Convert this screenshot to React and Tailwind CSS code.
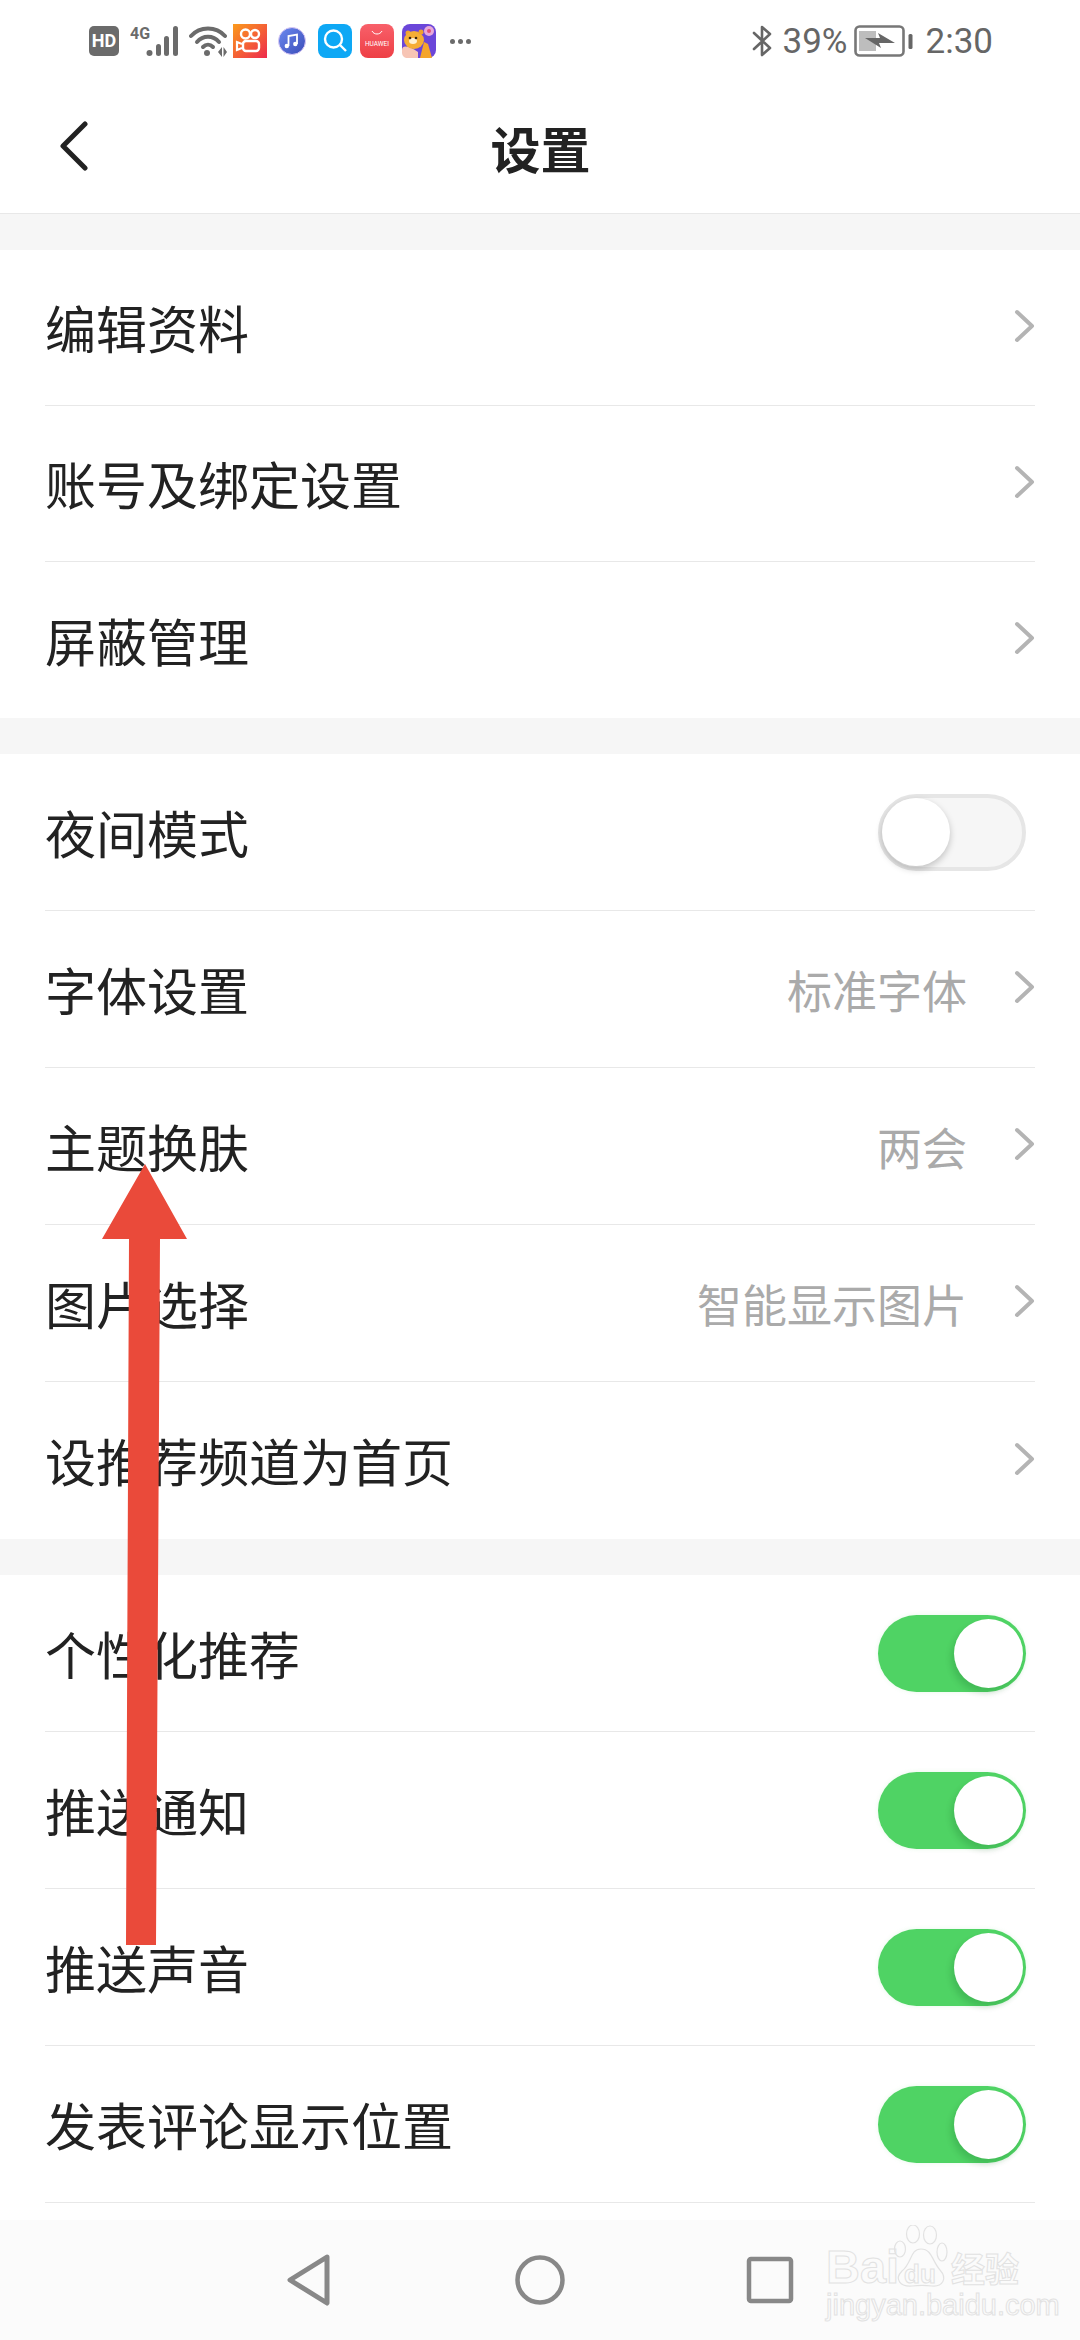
const CJK = { fontFamily: '"Noto Sans CJK SC", "Noto Sans", sans-serif' };

function Chevron() {
  return (
    <svg width="22" height="34" viewBox="0 0 22 34" fill="none" className="-mt-[4px] shrink-0">
      <path d="M3 3 L18 17 L3 31" stroke="#b4b4b4" strokeWidth="4" strokeLinecap="round" strokeLinejoin="round" />
    </svg>
  );
}

function Toggle({ on }) {
  if (on) {
    return (
      <div className="flex h-[77px] w-[148px] items-center justify-end rounded-full bg-[#4fd364] pr-[3px] shadow-[0_0_4px_rgba(79,211,100,0.15)]">
        <div className="h-[69px] w-[69px] rounded-full bg-white shadow-[-3px_5px_6px_rgba(0,60,20,0.16)]" />
      </div>
    );
  }
  return (
    <div className="flex h-[77px] w-[148px] items-center rounded-full border-[4px] border-[#e6e6e6] bg-[#f6f6f6]">
      <div className="h-[68px] w-[68px] rounded-full bg-white shadow-[0_3px_7px_rgba(0,0,0,0.22)]" />
    </div>
  );
}

function Row({ label, value, toggle, last, h = 'h-[157px]' }) {
  return (
    <div className={`mx-[45px] flex ${h} items-center justify-between ${last ? '' : 'border-b border-[#e8e8e8]'}`}>
      <span className="text-[51px] leading-none text-[#222]">{label}</span>
      {toggle !== undefined ? (
        <div className="mr-[9px]"><Toggle on={toggle} /></div>
      ) : (
        <div className="-mr-[1px] flex items-center gap-[47px]">
          {value && <span className="text-[45px] leading-none text-[#aaaaaa]">{value}</span>}
          <Chevron />
        </div>
      )}
    </div>
  );
}

function StatusLeft() {
  return (
    <div className="flex items-center">
      <div className="flex h-[30px] w-[30px] items-center justify-center rounded-[5px] bg-[#6b6b6b] text-[18px] font-bold leading-none text-white" style={{ fontFamily: 'Roboto, sans-serif' }}>HD</div>
      <svg width="50" height="32" viewBox="0 0 50 32" className="ml-[11px]">
        <text x="0" y="14" fontSize="16" fontWeight="700" fill="#6b6b6b" fontFamily="Roboto, sans-serif">4G</text>
        <circle cx="19.500" cy="28" r="3" fill="#6b6b6b" />
        <rect x="26" y="19" width="5" height="12" rx="2.500" fill="#6b6b6b" />
        <rect x="34" y="11" width="5" height="20" rx="2.500" fill="#6b6b6b" />
        <rect x="43" y="1" width="5" height="30" rx="2.500" fill="#6b6b6b" />
      </svg>
      <svg width="38" height="32" viewBox="0 0 38 32" className="ml-[9px]">
        <path d="M2 11 C11 1 27 1 36 11" stroke="#6b6b6b" strokeWidth="4" fill="none" strokeLinecap="round" />
        <path d="M8 17 C14 10 24 10 30 17" stroke="#6b6b6b" strokeWidth="4" fill="none" strokeLinecap="round" />
        <path d="M14 22 C17 19 21 19 24 22" stroke="#6b6b6b" strokeWidth="4" fill="none" strokeLinecap="round" />
        <circle cx="18" cy="28" r="3" fill="#6b6b6b" />
        <path d="M29 27 L33 22 V32 Z M34.500 22 L38 27 L34.500 32 Z" fill="#6b6b6b" />
      </svg>
      <svg width="34" height="34" viewBox="0 0 34 34" className="ml-[6px]">
        <defs>
          <linearGradient id="ks" x1="0" y1="0" x2="1" y2="1">
            <stop offset="0" stopColor="#fb9b1c" />
            <stop offset="1" stopColor="#ee2a4d" />
          </linearGradient>
        </defs>
        <rect width="34" height="34" fill="url(#ks)" />
        <circle cx="12.500" cy="10" r="4.500" fill="none" stroke="#fff" strokeWidth="2.400" />
        <circle cx="22" cy="10" r="4" fill="none" stroke="#fff" strokeWidth="2.400" />
        <rect x="10" y="17" width="16" height="10" rx="3" fill="none" stroke="#fff" strokeWidth="2.400" />
        <path d="M9 20 L4 18 V26 L9 24" fill="none" stroke="#fff" strokeWidth="2.200" />
      </svg>
      <svg width="30" height="30" viewBox="0 0 30 30" className="ml-[10px]">
        <defs>
          <linearGradient id="mu" x1="0" y1="0" x2="1" y2="1">
            <stop offset="0" stopColor="#6c8af0" />
            <stop offset="1" stopColor="#3a4cb8" />
          </linearGradient>
        </defs>
        <circle cx="15" cy="15" r="13.500" fill="url(#mu)" stroke="#d9c8f5" strokeWidth="1" />
        <path d="M11.500 20 V10 L20 8.500 V18" fill="none" stroke="#fff" strokeWidth="1.800" />
        <circle cx="9.800" cy="20" r="2.200" fill="#fff" />
        <circle cx="18.300" cy="18" r="2.200" fill="#fff" />
      </svg>
      <svg width="34" height="34" viewBox="0 0 34 34" className="ml-[11px]">
        <rect width="34" height="34" rx="8" fill="#0ea8f5" />
        <circle cx="15.500" cy="15" r="8.500" fill="none" stroke="#fff" strokeWidth="2.400" />
        <path d="M22 21 L28 27" stroke="#fff" strokeWidth="2.400" />
      </svg>
      <svg width="34" height="34" viewBox="0 0 34 34" className="ml-[8px]">
        <defs>
          <linearGradient id="hw" x1="0" y1="0" x2="0" y2="1">
            <stop offset="0" stopColor="#f8606a" />
            <stop offset="1" stopColor="#ee3f45" />
          </linearGradient>
        </defs>
        <rect width="34" height="34" rx="8" fill="url(#hw)" />
        <path d="M12 7 C14 11 20 11 22 7" fill="none" stroke="#fff" strokeWidth="1" />
        <text x="17" y="22" fontSize="6.500" fill="#fff" textAnchor="middle" fontFamily="Roboto, sans-serif">HUAWEI</text>
      </svg>
      <svg width="34" height="34" viewBox="0 0 34 34" className="ml-[8px]">
        <rect width="34" height="34" rx="8" fill="#6b46d9" />
        <path d="M0 26 C0 20 8 22 16 28 L16 34 H6 C2 34 0 32 0 28 Z" fill="#f7c5b5" />
        <circle cx="6" cy="9" r="2.500" fill="#f0a22e" />
        <ellipse cx="12" cy="16" rx="10" ry="9" fill="#f5ad35" />
        <circle cx="19" cy="8" r="2.500" fill="#f0a22e" />
        <ellipse cx="11" cy="17" rx="4" ry="3" fill="#fff0d0" />
        <circle cx="8" cy="14" r="1.300" fill="#3a2410" />
        <circle cx="14" cy="14" r="1.300" fill="#3a2410" />
        <path d="M18 34 L22 18 L26 20 L30 34 Z" fill="#f5a52c" />
        <circle cx="27" cy="7" r="5" fill="#e8a8d8" />
        <circle cx="27" cy="7" r="2" fill="#e0507a" />
      </svg>
      <div className="ml-[14px] flex items-center gap-[3px]">
        <div className="h-[5px] w-[5px] rounded-full bg-[#6b6b6b]" />
        <div className="h-[5px] w-[5px] rounded-full bg-[#6b6b6b]" />
        <div className="h-[5px] w-[5px] rounded-full bg-[#6b6b6b]" />
      </div>
    </div>
  );
}

function StatusRight() {
  return (
    <div className="flex items-center text-[35px] leading-none text-[#666]" style={{ fontFamily: 'Roboto, sans-serif' }}>
      <svg width="22" height="34" viewBox="0 0 22 34">
        <path d="M2 9 L18 24 L10 31 V3 L18 10 L2 25" fill="none" stroke="#666" strokeWidth="2.600" strokeLinecap="round" strokeLinejoin="round" />
      </svg>
      <span className="ml-[9px]">39%</span>
      <svg width="60" height="32" viewBox="0 0 60 32" className="ml-[6px]">
        <rect x="1.500" y="1.500" width="48" height="29" rx="4" fill="none" stroke="#777" strokeWidth="2.600" />
        <rect x="5" y="6" width="17" height="20" fill="#bdbdbd" />
        <path d="M11 13 L26 13 L24 8 L41 18 L25 18 L27 23 Z" fill="#666" />
        <rect x="54.500" y="9" width="4" height="15" rx="1.500" fill="#666" />
      </svg>
      <span className="ml-[12px]">2:30</span>
    </div>
  );
}

function Watermark() {
  return (
    <div className="pointer-events-none absolute left-[826px] top-[2225px] h-[100px] w-[200px]">
      <div className="absolute left-0 top-[18px] text-[47px] font-bold leading-none text-transparent [-webkit-text-stroke:1px_#e2e2e2]" style={{ fontFamily: '"Liberation Sans", sans-serif' }}>Bai</div>
      <svg width="60" height="64" viewBox="0 0 60 64" className="absolute left-[66px] top-0">
        <g fill="none" stroke="#e2e2e2" strokeWidth="1.200">
          <ellipse cx="21" cy="9" rx="6.500" ry="9" />
          <ellipse cx="38" cy="10" rx="6.500" ry="9" />
          <ellipse cx="8" cy="24" rx="5.500" ry="8" />
          <ellipse cx="50" cy="27" rx="5" ry="9" />
          <path d="M29 24 C18 24 20 38 10 46 C2 54 8 62 20 61 C28 60 32 60 40 61 C50 62 56 54 48 45 C40 36 40 24 29 24 Z" />
        </g>
      </svg>
      <div className="absolute left-[78px] top-[36px] text-[26px] font-bold leading-none text-transparent [-webkit-text-stroke:1px_#e2e2e2]" style={{ fontFamily: '"Liberation Sans", sans-serif' }}>du</div>
      <div className="absolute left-[125px] top-[26px] text-[34px] font-bold leading-none text-transparent [-webkit-text-stroke:1px_#e2e2e2]" style={CJK}>经验</div>
      <div className="absolute left-0 top-[66px] whitespace-nowrap text-[29px] leading-none text-transparent [-webkit-text-stroke:1px_#e2e2e2]" style={{ fontFamily: '"Liberation Sans", sans-serif' }}>jingyan.baidu.com</div>
    </div>
  );
}

export default function App() {
  return (
    <div className="relative flex h-[2340px] w-[1080px] flex-col overflow-hidden bg-white" style={CJK}>
      <div className="flex h-[80px] items-center justify-between pl-[89px] pr-[87px] pt-[2px]">
        <StatusLeft />
        <StatusRight />
      </div>
      <div className="grid h-[134px] grid-cols-[1fr_auto_1fr] items-center border-b border-[#e8e8e8] pl-[59px]">
        <svg width="30" height="50" viewBox="0 0 30 50" fill="none" className="-mt-[2px]">
          <path d="M26 3 L4 25 L26 47" stroke="#222" strokeWidth="5" strokeLinecap="round" strokeLinejoin="round" />
        </svg>
        <h1 className="-translate-x-[29px] text-[50px] font-bold leading-none text-[#222]">设置</h1>
        <div />
      </div>
      <div className="flex min-h-0 flex-1 flex-col gap-[36px] overflow-hidden bg-[#f6f6f6] pt-[36px]">
        <div className="bg-white">
          <Row label="编辑资料" h="h-[156px]" />
          <Row label="账号及绑定设置" h="h-[156px]" />
          <Row label="屏蔽管理" h="h-[156px]" last />
        </div>
        <div className="bg-white">
          <Row label="夜间模式" toggle={false} />
          <Row label="字体设置" value="标准字体" />
          <Row label="主题换肤" value="两会" />
          <Row label="图片选择" value="智能显示图片" />
          <Row label="设推荐频道为首页" last />
        </div>
        <div className="flex-1 bg-white">
          <Row label="个性化推荐" toggle={true} />
          <Row label="推送通知" toggle={true} />
          <Row label="推送声音" toggle={true} />
          <Row label="发表评论显示位置" toggle={true} />
        </div>
      </div>
      <div className="flex h-[120px] items-center bg-[#fbfbfb] pb-[1px] pl-[286px]">
        <svg width="46" height="54" viewBox="0 0 46 54" fill="none">
          <path d="M41 4 L4 27 L41 50 Z" stroke="#888" strokeWidth="5" strokeLinejoin="round" />
        </svg>
        <svg width="52" height="52" viewBox="0 0 52 52" fill="none" className="ml-[182px]">
          <circle cx="26" cy="26" r="22.500" stroke="#888" strokeWidth="4.500" />
        </svg>
        <svg width="48" height="48" viewBox="0 0 48 48" fill="none" className="ml-[180px]">
          <rect x="3" y="3" width="42" height="42" rx="2" stroke="#888" strokeWidth="4.500" />
        </svg>
      </div>
      <Watermark />
      <svg width="90" height="790" viewBox="0 0 90 790" className="pointer-events-none absolute left-[100px] top-[1160px]">
        <path d="M45 4 L87 79 L60 79 L56 785 L26 785 L29 79 L2 79 Z" fill="#ea4a3a" />
      </svg>
    </div>
  );
}
